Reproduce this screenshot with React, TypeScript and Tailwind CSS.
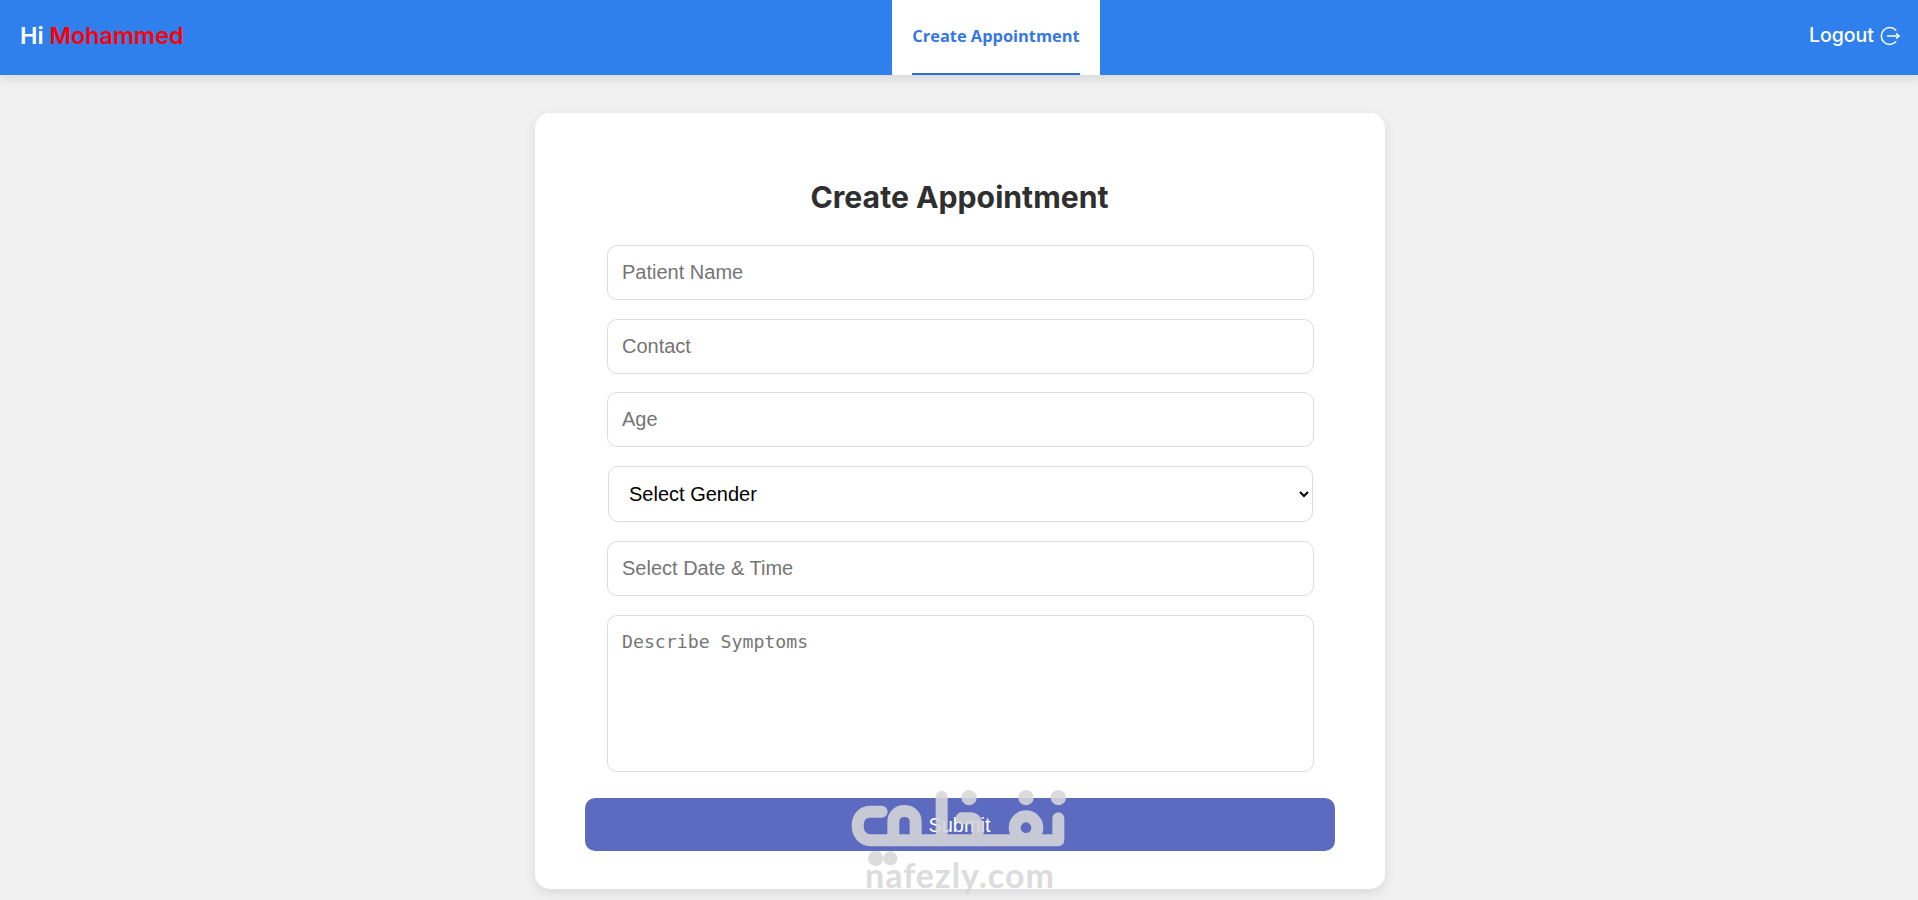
const inputClass =
  "block w-[707px] h-[55px] ml-[2px] px-[14px] bg-white border border-[#dcdcdc] rounded-[10px] text-[20px] font-['Liberation_Sans',sans-serif] placeholder:text-[#757575] outline-none"

function LogoutIcon() {
  return (
    <svg width="20" height="20" viewBox="0 0 20 20" fill="none" stroke="white" strokeWidth="1.5" strokeLinecap="round" strokeLinejoin="round">
      <path d="M15.8 4.2A8.4 8.4 0 1 0 15.8 15.8" />
      <path d="M7.5 10H19" />
      <path d="M16.6 7.7L19 10L16.6 12.3" />
    </svg>
  )
}

// nafezly logo stamped over the bottom of the page
function Watermark() {
  return (
    <div className="absolute left-[845px] top-[785px] w-[230px] h-[115px] opacity-[0.87] pointer-events-none">
      <svg className="absolute inset-0" width="230" height="115" viewBox="0 0 690 345" fill="none" stroke="#d7d7d7" strokeWidth="36" strokeLinecap="round" strokeLinejoin="round">
        <path d="M110 80H75C50 80 38 100 38 122C38 148 55 166 80 166H640V100" />
        <path d="M145 166V110C145 90 160 78 178 78C198 78 212 90 212 110V166" />
        <path d="M290 35V166" />
        <path d="M350 100H375C392 100 398 115 398 130V166" />
        <circle cx="543" cy="128" r="34" />
        <g fill="#d7d7d7" stroke="none">
          <circle cx="372" cy="38" r="23" />
          <circle cx="543" cy="38" r="23" />
          <circle cx="640" cy="38" r="23" />
          <circle cx="92" cy="220" r="23" />
          <circle cx="136" cy="220" r="21" />
        </g>
      </svg>
      <div className="absolute left-0 right-0 top-[75px] text-center text-[34px] leading-[30px] font-bold tracking-[1px] font-['Lato',sans-serif] text-[#d7d7d7]">
        nafezly.com
      </div>
    </div>
  )
}

export default function App() {
  return (
    <div className="relative h-[900px] overflow-hidden bg-[#f1f1f1] font-['Inter',sans-serif]">
      <header className="flex items-center h-[75px] pl-[20px] pr-[18px] bg-[#2f80ed] shadow-[0_4px_10px_rgba(0,0,0,0.1)]">
        <div className="w-[872px] pb-[4px] text-[23.4px] font-semibold text-white">
          Hi <span className="text-[#ff0000]">Mohammed</span>
        </div>
        <nav className="h-full w-[208px] px-[20px] bg-white">
          <a className="flex items-center justify-center h-full border-b-2 border-[#2f6fe0] pb-[1px] font-['Open_Sans',sans-serif] font-bold text-[16.4px] text-[#3578e5] whitespace-nowrap">
            Create Appointment
          </a>
        </nav>
        <div className="flex flex-1 items-center justify-end gap-[6px] pb-[3px] text-[19.5px] font-medium text-white">
          Logout
          <LogoutIcon />
        </div>
      </header>

      <main className="flex justify-center pt-[38px] pl-[1px]">
        <div className="flex flex-col items-center w-[850px] h-[776px] pt-[66px] bg-white rounded-[15px] shadow-[0_4px_12px_rgba(0,0,0,0.1)]">
          <h1 className="h-[36px] leading-[36px] text-[30.2px] font-bold text-[#2f2f2f]">Create Appointment</h1>
          <form className="flex flex-col items-center mt-[30px]">
            <input className={inputClass} placeholder="Patient Name" />
            <input className={inputClass + " mt-[19px]"} placeholder="Contact" />
            <input className={inputClass + " mt-[18px]"} placeholder="Age" />
            <select className="block w-[705px] h-[56px] mt-[19px] ml-[2px] pl-[16px] bg-white border border-[#dcdcdc] rounded-[10px] text-[20px] text-black font-['Liberation_Sans',sans-serif] outline-none">
              <option>Select Gender</option>
            </select>
            <input className={inputClass + " mt-[19px]"} placeholder="Select Date &amp; Time" />
            <textarea
              className="block w-[707px] h-[157px] mt-[19px] ml-[2px] px-[14px] py-[15px] bg-white border border-[#dcdcdc] rounded-[10px] text-[18.2px] leading-[22px] font-['DejaVu_Sans_Mono',monospace] placeholder:text-[#757575] outline-none resize-none"
              placeholder="Describe Symptoms"
            />
            <button
              type="button"
              className="block w-[750px] h-[53px] mt-[26px] bg-[#5c6bc0] rounded-[10px] text-[20px] text-white font-['Liberation_Sans',sans-serif]"
            >
              Submit
            </button>
          </form>
        </div>
      </main>

      <Watermark />
    </div>
  )
}
